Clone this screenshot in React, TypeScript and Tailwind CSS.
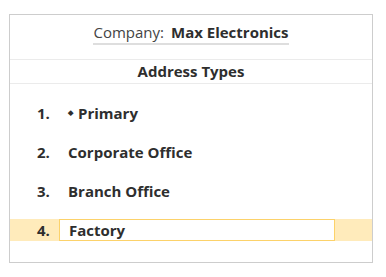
export default function App() {
  const rows = [
    { n: "1.", label: "Primary", primary: true },
    { n: "2.", label: "Corporate Office" },
    { n: "3.", label: "Branch Office" },
  ];

  return (
    <div
      className="pt-[14px] pl-[9px] w-[386px] h-[277px] bg-white text-[#2e2e2e]"
      style={{ fontFamily: '"Open Sans", sans-serif' }}
    >
      <div className="w-[364px] h-[249px] border border-[#cdcdcd] flex flex-col">
        <div className="h-[45px] flex justify-center items-end border-b border-[#ebebeb]">
          <div className="mb-[14px] flex items-baseline gap-[7px] text-[15px] leading-[20px] border-b-2 border-[#dedede] pb-[1px]">
            <span className="text-[#444]">Company:</span>
            <span className="font-bold">Max Electronics</span>
          </div>
        </div>
        <div className="h-[24px] flex items-center justify-center border-b border-[#ebebeb] text-[15px] font-bold">
          Address Types
        </div>
        <div className="pt-[18px] flex flex-col gap-[17px]">
          {rows.map((r) => (
            <div key={r.n} className="h-[22px] flex items-center text-[15px] font-bold">
              <span className="w-[49px] pl-[27px]">{r.n}</span>
              <span className="pl-[9px] flex items-center">
                {r.primary && <span className="text-[7px] mr-[5px]">◆</span>}
                {r.label}
              </span>
            </div>
          ))}
          <div className="h-[22px] flex items-center bg-[#ffebbb] text-[15px] font-bold">
            <span className="w-[49px] pl-[27px]">4.</span>
            <div className="w-[276px] h-[22px] border border-[#fcd26a] bg-white flex items-center pl-[9px]">
              Factory
            </div>
          </div>
        </div>
      </div>
    </div>
  );
}
